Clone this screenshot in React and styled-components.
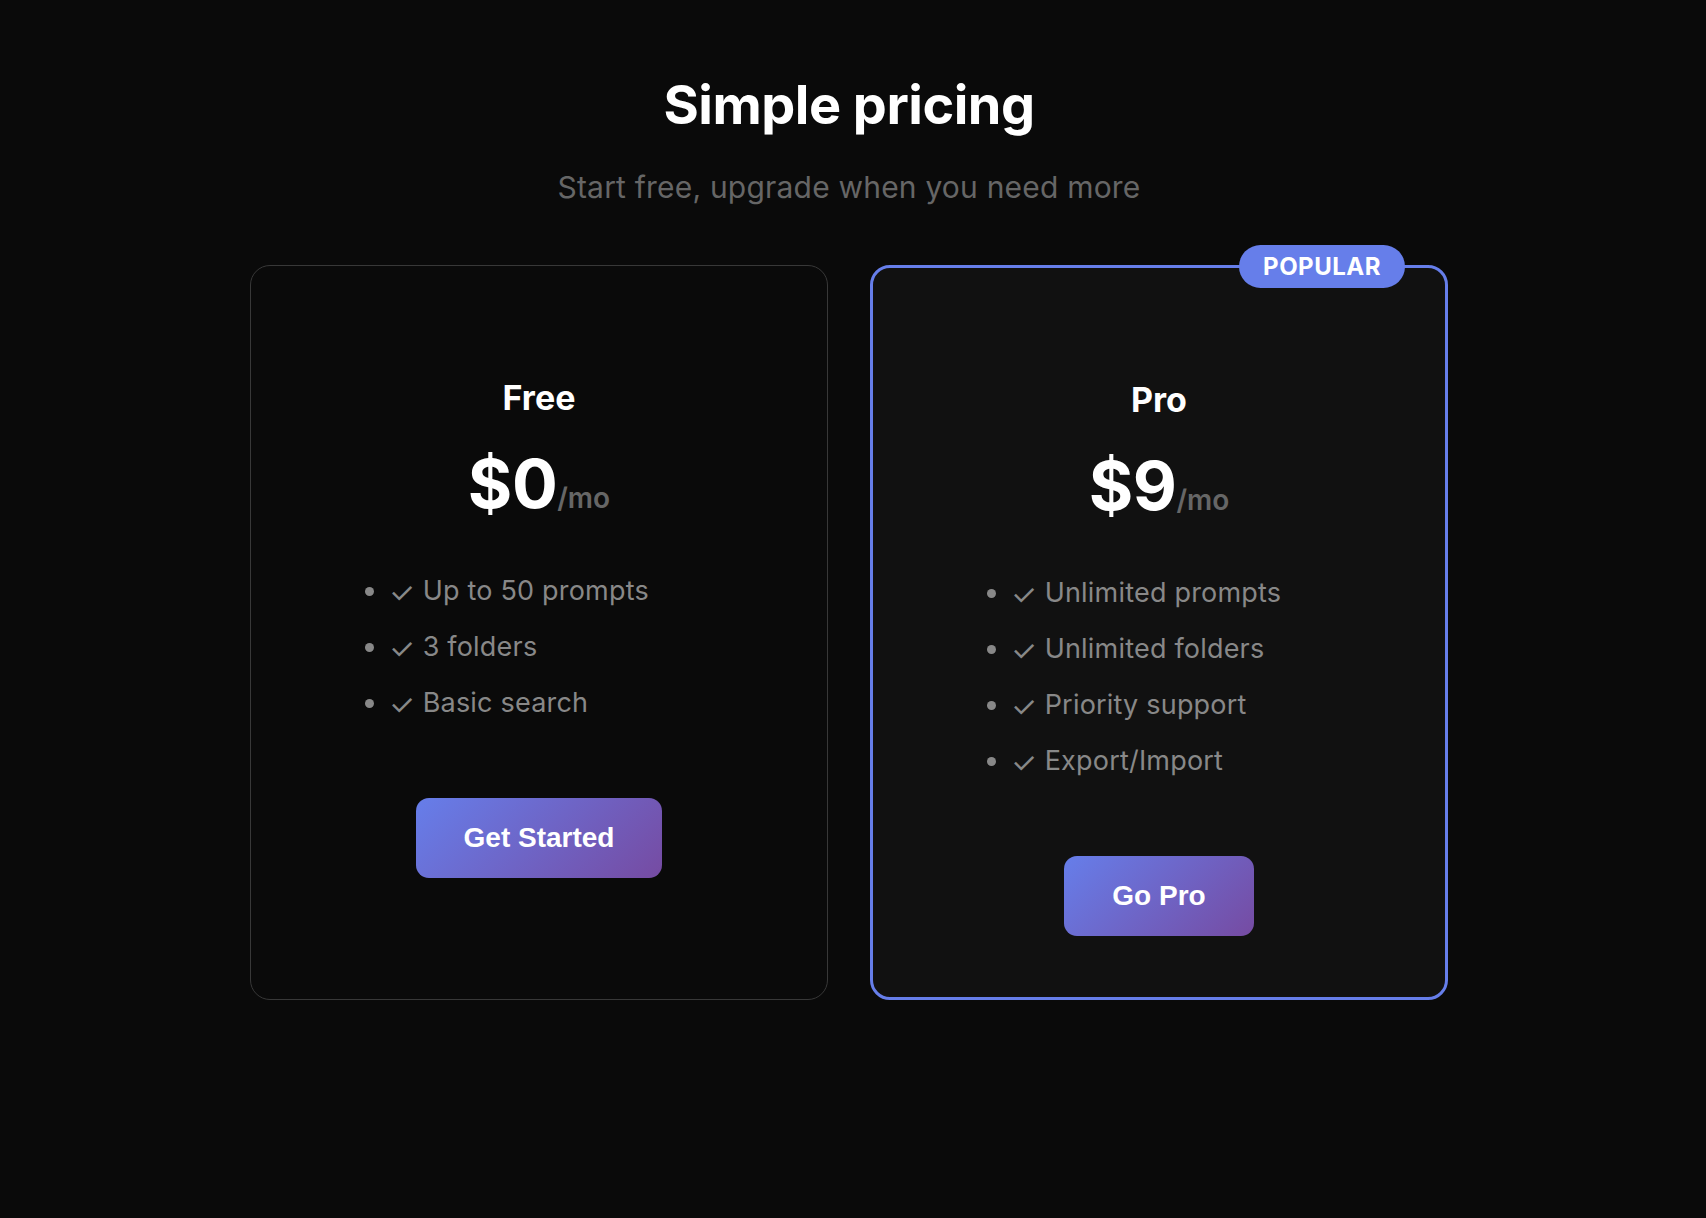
import React from 'react'
import styled, { createGlobalStyle } from 'styled-components'

const GlobalStyle = createGlobalStyle`
    body {
        margin: 0;
        background: #0a0a0a;
        font-family: Inter, "Liberation Sans", sans-serif;
    }
`;

const Page = styled.main`
    min-height: 1218px;
    box-sizing: border-box;
    padding: 72px 8px 0 0;
    text-align: center;
    color: #fff;
`;

const Title = styled.h1`
    margin: 0;
    font-size: 54px;
    font-weight: 700;
    letter-spacing: -0.5px;
`;

const Subtitle = styled.p`
    margin: 32px 0 60px;
    font-size: 30px;
    letter-spacing: 0.2px;
    color: #666;
`;

const Plans = styled.section`
    display: grid;
    grid-template-columns: repeat(2, 578px);
    gap: 42px;
    justify-content: center;
`;

const Card = styled.div`
    position: relative;
    display: flex;
    flex-direction: column;
    align-items: center;
    padding: 61px 48px;
    border: ${p => p.featured ? '3px solid #667eea' : '1px solid #383838'};
    border-radius: 20px;
    background: ${p => p.featured ? '#111' : '#0a0a0a'};
`;

//  徽章压在卡片边框上
const Badge = styled.span`
    position: absolute;
    top: -23px;
    right: 40px;
    padding: 7px 24px;
    border-radius: 22px;
    background: #667eea;
    color: #fff;
    font-size: 24px;
    font-weight: 700;
    letter-spacing: 0.5px;
    text-transform: uppercase;
`;

const PlanName = styled.h3`
    margin: 50px 0 24px;
    font-size: 34px;
    font-weight: 700;
`;

const Price = styled.div`
    font-size: 68px;
    font-weight: 700;
    letter-spacing: -0.5px;
`;

const Period = styled.span`
    font-size: 28px;
    font-weight: 600;
    color: #666;
    letter-spacing: 0;
`;

const Features = styled.ul`
    align-self: stretch;
    margin: 47px 0 75px;
    padding: 0 0 0 90px;
    text-align: left;
    color: #888;
    font-size: 27px;
    letter-spacing: 0.2px;
`;

const Feature = styled.li`
    line-height: 40px;
    margin-bottom: 16px;

    &:last-child {
        margin-bottom: 0;
    }
`;

const Check = styled.span`
    display: inline-block;
    font-size: 29px;
    line-height: 1;
    vertical-align: -3px;
`;

const CtaButton = styled.button`
    padding: 24px 48px;
    border: none;
    border-radius: 13px;
    background: linear-gradient(135deg, #667eea 0%, #764ba2 100%);
    color: #fff;
    font-family: "Liberation Sans", Arial, sans-serif;
    font-size: 28px;
    font-weight: 700;
    cursor: pointer;
`;

const plans = [
    {
        name: 'Free',
        price: 0,
        features: ['Up to 50 prompts', '3 folders', 'Basic search'],
        cta: 'Get Started',
    },
    {
        name: 'Pro',
        price: 9,
        featured: true,
        features: ['Unlimited prompts', 'Unlimited folders', 'Priority support', 'Export/Import'],
        cta: 'Go Pro',
    },
]

const App = () => {
    return (
        <>
            <GlobalStyle />
            <Page>
                <Title>Simple pricing</Title>
                <Subtitle>Start free, upgrade when you need more</Subtitle>
                <Plans>
                    {plans.map(plan => (
                        <Card key={plan.name} featured={plan.featured}>
                            {plan.featured && <Badge>Popular</Badge>}
                            <PlanName>{plan.name}</PlanName>
                            <Price>${plan.price}<Period>/mo</Period></Price>
                            <Features>
                                {plan.features.map(f => (
                                    <Feature key={f}><Check>✓</Check> {f}</Feature>
                                ))}
                            </Features>
                            <CtaButton>{plan.cta}</CtaButton>
                        </Card>
                    ))}
                </Plans>
            </Page>
        </>
    )
}

export default App
